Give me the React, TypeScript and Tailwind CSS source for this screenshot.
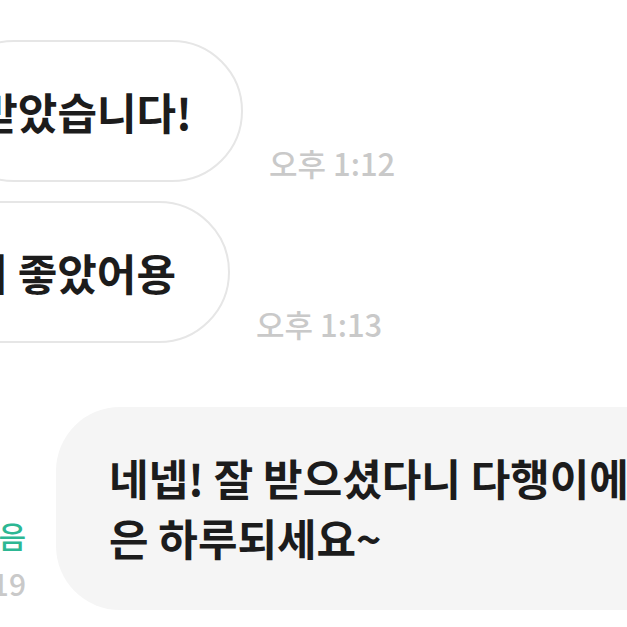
import React from "react";

const font = { fontFamily: '"Noto Sans CJK KR", "Noto Sans", sans-serif' };

function Received({ text, time, width, shift, pad, top }: { text: string; time: string; width: number; shift: number; pad: number; top: string }) {
  return (
    <div className={`flex items-end ${top}`}>
      <div
        className="flex h-[142px] shrink-0 items-center justify-end whitespace-nowrap rounded-full border-2 border-[#e6e6e6] bg-white text-[43px] font-bold text-[#1c1c1c]"
        style={{ width, marginLeft: shift, paddingRight: pad }}
      >
        {text}
      </div>
      <span className="mb-[4px] ml-[26px] whitespace-nowrap text-[31px] font-medium leading-none text-[#c9c9c9]">{time}</span>
    </div>
  );
}

export default function App() {
  return (
    <div className="relative h-[627px] w-[627px] overflow-hidden bg-white" style={font}>
      <div className="flex flex-col">
        <Received text="잘 받았습니다!" time="오후 1:12" width={300} shift={-57} pad={49} top="mt-[40px]" />
        <Received text="꼼꼼하니 좋았어용" time="오후 1:13" width={300} shift={-70} pad={52} top="mt-[19px]" />

        <div className="mt-[64px] flex items-end">
          <div className="mb-[12px] flex w-[26px] shrink-0 flex-col items-end whitespace-nowrap leading-none">
            <span className="text-[30px] font-medium text-[#2db793]">읽음</span>
            <span className="mt-[18px] text-[30px] font-medium text-[#c9c9c9]">오후 1:19</span>
          </div>
          <div className="ml-[30px] h-[203px] w-[700px] shrink-0 rounded-[64px] bg-[#f5f5f5] pl-[53px] pt-[40px] text-[43px] font-bold leading-[60px] text-[#1c1c1c]">
            <p className="whitespace-nowrap">네넵! 잘 받으셨다니 다행이에요 좋</p>
            <p className="whitespace-nowrap">은 하루되세요~</p>
          </div>
        </div>
      </div>
    </div>
  );
}
